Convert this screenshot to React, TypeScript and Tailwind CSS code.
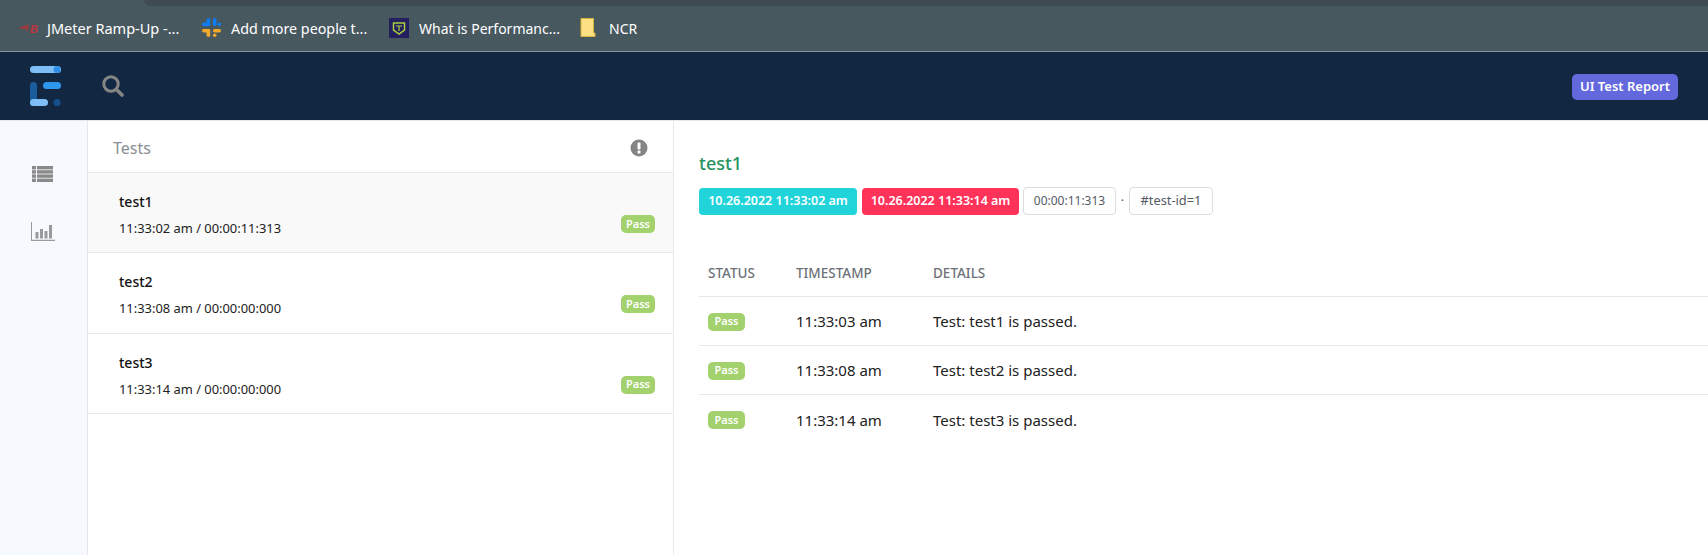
const font = "[font-family:'Noto_Sans',sans-serif]";

const JMeterIcon = () => (
  <svg width="22" height="11" viewBox="0 0 22 11">
    <path d="M0 5 L11 1 L9.5 4 L11 4 L9 9 L8 6 L5 6 Z" fill="#9c3a40" />
    <text x="12" y="10" fontSize="11" fontWeight="700" fontStyle="italic" fill="#c0343c" fontFamily="Liberation Sans">B</text>
  </svg>
);

const SlackIcon = () => (
  <svg width="20" height="20" viewBox="0 0 22 22">
    <rect x="5" y="0" width="4" height="9" rx="2" fill="#0f7bf0" />
    <rect x="12" y="0" width="4" height="9" rx="2" fill="#0f7bf0" />
    <rect x="17" y="5" width="4" height="4" rx="2" fill="#0f7bf0" />
    <rect x="0" y="5" width="9" height="4" rx="2" fill="#0f7bf0" />
    <rect x="0" y="12" width="9" height="4" rx="2" fill="#f2aa2a" />
    <rect x="12" y="12" width="9" height="4" rx="2" fill="#f2aa2a" />
    <rect x="5" y="12" width="4" height="9" rx="2" fill="#f2aa2a" />
    <rect x="12" y="17" width="4" height="4" rx="2" fill="#f2aa2a" />
  </svg>
);

const PerfIcon = () => (
  <svg width="20" height="20" viewBox="0 0 20 20">
    <rect width="20" height="20" fill="#241f5f" />
    <path d="M4.5 5 H15.5 V12 L10 16 L4.5 12 Z" fill="none" stroke="#a8d13c" strokeWidth="1.5" />
    <path d="M7 8 H13 M10 8 V13" stroke="#a8d13c" strokeWidth="1.2" />
  </svg>
);

const NoteIcon = () => (
  <svg width="16" height="20" viewBox="0 0 16 20">
    <path d="M1 .5 H13.5 V15 L15 15 V18.5 H1 Z" fill="#fde083" stroke="#d9b53f" />
  </svg>
);

const Logo = () => (
  <svg width="31" height="40" viewBox="0 0 31 40">
    <rect x="0" y="0" width="31" height="7" rx="3.5" fill="#7fbdf6" />
    <circle cx="27" cy="3.5" r="3.5" fill="#2f8fe8" />
    <rect x="13" y="16" width="18" height="7" rx="3.5" fill="#2f96ee" />
    <rect x="0" y="16" width="7" height="24" rx="3.5" fill="#1b5c9c" />
    <rect x="0" y="33" width="18" height="7" rx="3.5" fill="#7fbdf6" />
    <circle cx="27" cy="36.5" r="3.5" fill="#14508c" />
  </svg>
);

const SearchIcon = () => (
  <svg width="22" height="22" viewBox="0 0 22 22" fill="none" stroke="#858585">
    <circle cx="9" cy="9" r="7.2" strokeWidth="3" />
    <path d="M14.5 14.5 L20 20" strokeWidth="3.6" strokeLinecap="round" />
  </svg>
);

const ListIcon = () => (
  <svg width="21" height="16" viewBox="0 0 21 16" fill="#8a8a8a">
    <rect x="0" y="0" width="4" height="3.4" />
    <rect x="5" y="0" width="16" height="3.4" />
    <rect x="0" y="4.2" width="4" height="3.4" />
    <rect x="5" y="4.2" width="16" height="3.4" />
    <rect x="0" y="8.4" width="4" height="3.4" />
    <rect x="5" y="8.4" width="16" height="3.4" />
    <rect x="0" y="12.6" width="4" height="3.4" />
    <rect x="5" y="12.6" width="16" height="3.4" />
  </svg>
);

const ChartIcon = () => (
  <svg width="24" height="19" viewBox="0 0 24 19" fill="#9a9a9a">
    <path d="M0 0 H1 V17.8 H24 V19 H0 Z" />
    <rect x="4.5" y="10" width="3" height="6.5" />
    <rect x="9" y="7" width="3" height="9.5" />
    <rect x="13.5" y="9" width="3" height="7.5" />
    <rect x="18" y="3" width="3" height="13.5" />
  </svg>
);

const AlertIcon = () => (
  <svg width="18" height="18" viewBox="0 0 18 18">
    <circle cx="9" cy="9" r="8.5" fill="#858585" />
    <rect x="7.5" y="3.5" width="3" height="7" rx="1" fill="#fff" />
    <rect x="7.5" y="11.5" width="3" height="3" rx="1" fill="#fff" />
  </svg>
);

const Pass = ({ big }: { big?: boolean }) => (
  <span
    className={`inline-flex items-center justify-center bg-[#a2d16d] text-white font-semibold text-[11px] rounded-[5px] h-[18px] ${
      big ? "w-[37px]" : "w-[34px]"
    }`}
  >
    Pass
  </span>
);

const bookmarks = [
  { icon: <JMeterIcon />, label: "JMeter Ramp-Up -...", w: "w-[184px]", gap: "gap-[7px]", iconW: "w-[22px]", size: "text-[14.5px]" },
  { icon: <SlackIcon />, label: "Add more people t...", w: "w-[187px]", gap: "gap-[9px]", iconW: "w-[20px]", size: "text-[14.3px]" },
  { icon: <PerfIcon />, label: "What is Performanc...", w: "w-[191px]", gap: "gap-[10px]", iconW: "w-[20px]", size: "text-[14px]" },
  { icon: <NoteIcon />, label: "NCR", w: "w-auto", gap: "gap-[13px]", iconW: "w-[16px]", size: "text-[14px]" },
];

const tests = [
  { name: "test1", time: "11:33:02 am / 00:00:11:313", active: true },
  { name: "test2", time: "11:33:08 am / 00:00:00:000" },
  { name: "test3", time: "11:33:14 am / 00:00:00:000" },
];

const logs = [
  { time: "11:33:03 am", text: "Test: test1 is passed." },
  { time: "11:33:08 am", text: "Test: test2 is passed." },
  { time: "11:33:14 am", text: "Test: test3 is passed." },
];

export default function App() {
  return (
    <div className={`w-[1708px] h-[555px] overflow-hidden flex flex-col bg-white ${font}`}>
      {/* browser bookmarks */}
      <div className="h-[52px] shrink-0 flex flex-col bg-[#48585f] border-b border-[#8b989d]">
        <div className="h-[6px] ml-[144px] bg-[#3f4b50] rounded-bl-[6px]" />
        <div className="flex items-center h-[47px] pl-[18px] text-white">
          {bookmarks.map((b) => (
            <div key={b.label} className={`flex items-center ${b.w} ${b.gap}`}>
              <span className={`flex items-center justify-start ${b.iconW}`}>{b.icon}</span>
              <span className={b.size}>{b.label}</span>
            </div>
          ))}
        </div>
      </div>

      {/* nav */}
      <div className="h-[68px] shrink-0 flex items-center bg-[#122842] pl-[30px] pr-[30px]">
        <Logo />
        <span className="ml-[41px] flex">
          <SearchIcon />
        </span>
        <span className="ml-auto mt-[2px] flex items-center justify-center w-[106px] h-[26px] rounded-[5px] bg-[#6468dd] text-white text-[13px] font-semibold">
          UI Test Report
        </span>
      </div>

      <div className="flex-1 flex border-t border-[#e8e8e8]">
        {/* side nav */}
        <div className="w-[88px] shrink-0 bg-[#f6faff] border-r border-[#e6e6e6] flex flex-col items-center pr-[2px] pt-[45px] gap-[40px]">
          <ListIcon />
          <ChartIcon />
        </div>

        {/* test list */}
        <div className="w-[586px] shrink-0 border-r border-[#e8e8e8] flex flex-col">
          <div className="h-[52px] shrink-0 flex items-center justify-between pl-[25px] pr-[25px] pt-[2px] border-b border-[#e8e8e8]">
            <span className="text-[16px] text-[#8a8f94]">Tests</span>
            <AlertIcon />
          </div>
          {tests.map((t) => (
            <div
              key={t.name}
              className={`h-[80.3px] shrink-0 relative border-b border-[#e8e8e8] pl-[31px] pt-[19px] ${
                t.active ? "bg-[#f9f9f9]" : ""
              }`}
            >
              <div className="text-[14px] leading-[20px] font-medium text-[#111]">{t.name}</div>
              <div className="mt-[6px] text-[12.9px] leading-[20px] text-[#222]">{t.time}</div>
              <div className="absolute right-[18px] top-[42px] flex">
                <Pass />
              </div>
            </div>
          ))}
        </div>

        {/* detail */}
        <div className="flex-1 pl-[25px] pt-[30px]">
          <h5 className="text-[18px] leading-[24px] font-medium text-[#26925f]">test1</h5>
          <div className="mt-[12px] flex items-center text-[12.5px] h-[28px]">
            <span className="flex items-center justify-center w-[158px] h-[27px] rounded-[4px] bg-[#21d4da] text-white font-semibold">
              10.26.2022 11:33:02 am
            </span>
            <span className="ml-[5px] flex items-center justify-center w-[157px] h-[27px] rounded-[4px] bg-[#ff325a] text-white font-semibold">
              10.26.2022 11:33:14 am
            </span>
            <span className="ml-[4px] flex items-center justify-center w-[93px] h-[28px] rounded-[4px] border border-[#dddddd] text-[12px] text-[#555a66]">
              00:00:11:313
            </span>
            <span className="w-[13px] text-center text-[#555]">·</span>
            <span className="flex items-center justify-center w-[84px] h-[28px] rounded-[4px] border border-[#dddddd] text-[12.8px] text-[#555a66]">
              #test-id=1
            </span>
          </div>

          <div className="mt-[34px]">
            <div className="h-[48px] pt-[2px] grid grid-cols-[88px_137px_1fr] items-center pl-[9px] border-b border-[#e8e8e8] text-[13.5px] font-medium text-[#6c7178]">
              <span>STATUS</span>
              <span>TIMESTAMP</span>
              <span>DETAILS</span>
            </div>
            {logs.map((l) => (
              <div
                key={l.time}
                className="h-[49px] pt-[1px] grid grid-cols-[88px_137px_1fr] items-center pl-[9px] border-b border-[#e8e8e8] last:border-b-0 text-[15px] text-[#212121]"
              >
                <span className="flex">
                  <Pass big />
                </span>
                <span>{l.time}</span>
                <span>{l.text}</span>
              </div>
            ))}
          </div>
        </div>
      </div>
    </div>
  );
}
